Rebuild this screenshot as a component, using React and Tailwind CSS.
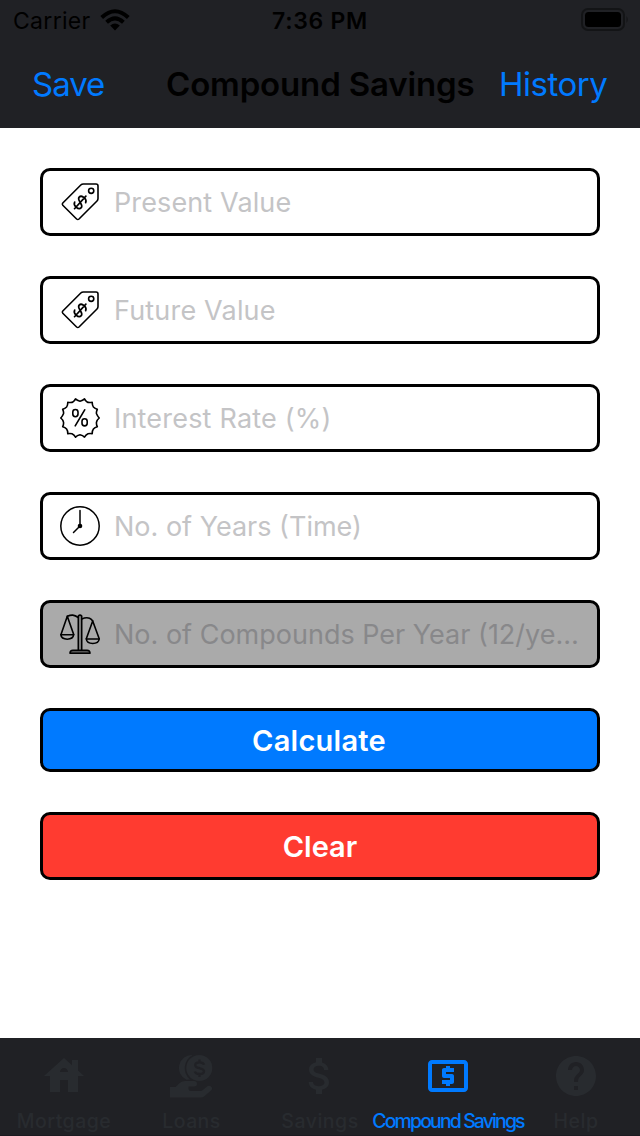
import { MdHouse, MdAttachMoney, MdLocalAtm, MdHelp } from "react-icons/md";

function TagIcon() {
  return (
    <svg className="size-10 shrink-0" viewBox="0 0 40 40" fill="none" stroke="#000" strokeWidth="1.6" strokeLinejoin="round" strokeLinecap="round">
      <path d="M2.8 21 20.8 3Q21.8 2 23.4 2H36Q38 2 38 4V16.5Q38 18 37 19L19 37Q17.8 38 16.6 37L2.8 23.2Q1.8 22 2.8 21Z" />
      <circle cx="31.2" cy="8.8" r="2.6" />
      <g transform="translate(20.2 20.4) rotate(42)" strokeWidth="1.7">
        <path d="M4.2-3.5C3.500-5.600 1.800-6.200 0-6.200-2.500-6.200-4.300-5-4.300-3.200-4.300-1-2-.600 0 0S4.300 1 4.300 3.200C4.300 5 2.300 6.200 0 6.200-2 6.200-3.800 5.400-4.300 3.500M0-8.500V8.500" />
      </g>
    </svg>
  );
}

function RateIcon() {
  return (
    <svg className="size-10 shrink-0" viewBox="0 0 40 40" fill="none" stroke="#000" strokeWidth="1.6" strokeLinejoin="round" strokeLinecap="round">
      <path d="M20 3.200Q22.800 2.600 24.500 .9Q25.800 3.400 28 4.400Q30.200 4.700 32.200 4.300Q32.200 7.500 33.400 9Q35 10.700 37.300 11.300Q36.100 13.800 36.500 15.800Q37.400 18 39.200 20Q37 21.800 36.500 24.200Q36.200 26.500 37.300 28.700Q34.800 29.200 33.400 31Q32.200 32.500 32.200 35.700Q30.200 35.200 28 35.700Q25.800 36.600 24.500 39.100Q22.800 37.300 20 36.800Q17.200 37.300 15.500 39.100Q14.200 36.600 12 35.700Q9.800 35.200 7.800 35.700Q7.800 32.500 6.600 31Q5.200 29.200 2.700 28.700Q3.800 26.500 3.500 24.200Q3 21.800 .8 20Q2.600 18 3.500 15.800Q3.900 13.800 2.700 11.300Q5 10.700 6.600 9Q7.800 7.500 7.800 4.300Q9.800 4.700 12 4.400Q14.200 3.400 15.500 .9Q17.200 2.600 20 3.200Z" />
      <rect x="12.800" y="11.500" width="5.200" height="7.200" rx="2.600" />
      <rect x="22" y="20.700" width="5.200" height="7.200" rx="2.600" />
      <path d="m24.700 11.800-9.500 16" />
    </svg>
  );
}

function ClockIcon() {
  return (
    <svg className="size-10 shrink-0" viewBox="0 0 40 40" fill="none" stroke="#000" strokeWidth="1.5" strokeLinecap="round">
      <circle cx="20" cy="20" r="19.2" />
      <path d="M20 4.5V20l-6.5 6.5" />
      <circle cx="20" cy="20" r="2.3" fill="#000" stroke="none" />
    </svg>
  );
}

function ScaleIcon() {
  return (
    <svg className="size-10 shrink-0" viewBox="0 0 40 40" fill="none" stroke="#000" strokeWidth="1.6" strokeLinejoin="round" strokeLinecap="round">
      <path d="M18.300 36V2Q20 .2 21.700 2V36" fill="#888" />
      <path d="M18.300 3.500C14 .5 11.500.5 7.300 2.300M21.700 5C25 3.600 27.500 3.400 29.500 4.300Q31.500 5.200 32.700 7" />
      <path d="M7.300 2.300 1 20.500M7.300 2.300 13.700 20.500M32.700 7 26.300 24.700M32.700 7 39.200 24.700" />
      <path d="M.8 20.700H13.700c-.8 6-12.100 6-12.900 0ZM26.300 25H39.200c-.8 6-12.100 6-12.900 0Z" />
      <path d="M10 39.200c0-2 .8-3 3-3h14c2.200 0 3 1 3 3Z" fill="#555" />
    </svg>
  );
}

function LoanIcon() {
  return (
    <svg className="mr-[2px] h-[43px] w-[43px]" viewBox="0 0 43 43" fill="currentColor">
      <path d="M22.500 0A13 13 0 0 0 16.500 24.800L20 24.500A15 15 0 0 1 22.500 0Z" />
      <circle cx="29.300" cy="13" r="13" />
      <path d="M34 9.700C33.500 8 32 7.300 29.500 7.300 27 7.300 25.200 8.300 25.200 10.200 25.200 12.200 27 12.600 29.500 13.200S34 14.200 34 16.200C34 18 32 19 29.500 19 27 19 25.300 18 24.900 16.500M29.500 4.500V7.500M29.500 19V22" fill="none" stroke="#202125" strokeWidth="2.300" />
      <path d="M0 32H5.500L10 27.700Q12 26 15 26H24Q27 26 27 28.700T24 31.500H18.500V33.500Q18.500 36 21 36H30Q32 36 33.500 34.500L37 31.500Q39 30 41 31.500T41.500 35L34 41.500Q33 42.500 31.500 42.500H0Z" stroke="#202125" strokeWidth="1" paintOrder="stroke" />
    </svg>
  );
}

function Field({ icon, label, labelClass, disabled }) {
  return (
    <div className={`flex h-[68px] items-center rounded-[10px] border-3 border-black pl-[17px] ${disabled ? "bg-[#aaaaaa] text-[#88888a]" : "bg-white text-[#c4c4c6]"}`}>
      {icon}
      <span className={`ml-[14px] pt-[2px] text-[27px] leading-8 whitespace-nowrap ${labelClass}`}>{label}</span>
    </div>
  );
}

function Tab({ icon, label, labelClass }) {
  return (
    <div className="flex w-32 flex-col items-center text-[#282b2f]">
      <div className="flex h-12 items-center justify-center">{icon}</div>
      <span className={`mt-[9px] text-[19.5px] leading-6 font-medium whitespace-nowrap ${labelClass}`}>{label}</span>
    </div>
  );
}

export default function App() {
  return (
    <div className="flex h-[1136px] w-[640px] flex-col overflow-hidden bg-white font-['Inter',sans-serif]">
      <header className="h-32 bg-[#202125]">
        <div className="grid h-10 grid-cols-3 items-center pr-[11px] pl-[13px] text-black">
          <div className="flex items-center gap-[9px]">
            <span className="pt-[2px] text-[23px] leading-7 tracking-[0.3px]">Carrier</span>
            <svg className="h-[22px] w-[30px]" viewBox="0 0 30 22" fill="none" stroke="#000" strokeWidth="4">
              <path d="M1.700 8.500Q15-4 28.300 8.500" />
              <path d="M6.600 13.300Q15 5.500 23.400 13.300" />
              <path d="M10.200 16.500Q15 12.500 19.800 16.500L15 21.500Z" fill="#000" stroke="none" />
            </svg>
          </div>
          <span className="pt-[2px] pr-[2px] text-center text-[23px] leading-7 font-semibold tracking-[0.7px]">7:36 PM</span>
          <svg className="h-6 w-12 justify-self-end" viewBox="0 0 48 24">
            <rect x="1" y="1" width="42" height="21" rx="6" fill="none" stroke="#131416" strokeWidth="2" />
            <rect x="4" y="4" width="36" height="15" rx="3.500" fill="#000" />
            <path d="M45.500 8q2.500 3.500 0 7Z" fill="#131416" />
          </svg>
        </div>
        <div className="flex h-[88px] items-center pl-[32px] text-[33px] leading-10 whitespace-nowrap">
          <span className="w-[134px] tracking-[-1px] text-[#007aff]">Save</span>
          <span className="w-[333px] font-semibold tracking-[-0.15px] text-black">Compound Savings</span>
          <span className="tracking-[-0.5px] text-[#007aff]">History</span>
        </div>
      </header>
      <main className="flex flex-1 flex-col gap-10 px-10 pt-10">
        <Field icon={<TagIcon />} label="Present Value" labelClass="tracking-[0.12px]" />
        <Field icon={<TagIcon />} label="Future Value" labelClass="tracking-[0.18px]" />
        <Field icon={<RateIcon />} label="Interest Rate (%)" labelClass="tracking-[0.2px]" />
        <Field icon={<ClockIcon />} label="No. of Years (Time)" labelClass="" />
        <Field icon={<ScaleIcon />} label="No. of Compounds Per Year (12/ye…" labelClass="" disabled />
        <button className="h-16 rounded-[10px] border-3 border-black bg-[#007aff] pt-[2px] pr-[2px] text-[29px] leading-8 font-semibold tracking-[0.25px] text-white">Calculate</button>
        <button className="h-[68px] rounded-[10px] border-3 border-black bg-[#ff3b30] pt-[2px] text-[29px] leading-8 font-semibold text-white">Clear</button>
      </main>
      <nav className="flex h-[98px] border-b border-[#1b1a20] bg-[#202125] pt-[14px]">
        <Tab icon={<MdHouse className="size-12" />} label="Mortgage" labelClass="tracking-[0.5px]" />
        <Tab icon={<LoanIcon />} label="Loans" labelClass="pr-[1px] tracking-[0.4px]" />
        <Tab icon={<MdAttachMoney className="size-12" />} label="Savings" labelClass="tracking-[0.5px]" />
        <Tab icon={<MdLocalAtm className="size-12 text-[#007aff]" />} label="Compound Savings" labelClass="text-[#007aff] tracking-[-1.9px]" />
        <Tab icon={<MdHelp className="size-12" />} label="Help" labelClass="tracking-[0.5px]" />
      </nav>
    </div>
  );
}
